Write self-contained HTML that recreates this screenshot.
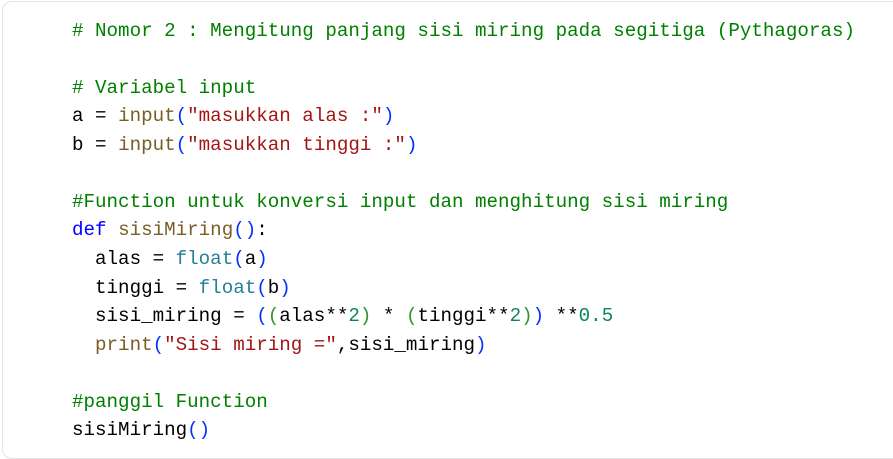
<!DOCTYPE html>
<html><head><meta charset="utf-8"><style>
html,body{margin:0;padding:0;background:#fff;width:893px;height:459px;overflow:hidden}
.box{position:absolute;left:2px;top:1px;width:900px;height:456px;border:1px solid #e3e3e3;border-radius:10px;background:#fff}
pre{position:absolute;left:72px;top:16.5px;margin:0;font-family:"Liberation Mono",monospace;font-size:19.2px;line-height:28.57px;color:#000}
.c{color:#008000}.k{color:#0000ff}.f{color:#795e26}.s{color:#a31515}.b{color:#267f99}.p{color:#0431fa}.q{color:#319331}.n{color:#098658}
</style></head><body><div class="box"></div>
<pre><span class="c"># Nomor 2 : Mengitung panjang sisi miring pada segitiga (Pythagoras)</span>

<span class="c"># Variabel input</span>
a = <span class="f">input</span><span class="p">(</span><span class="s">"masukkan alas :"</span><span class="p">)</span>
b = <span class="f">input</span><span class="p">(</span><span class="s">"masukkan tinggi :"</span><span class="p">)</span>

<span class="c">#Function untuk konversi input dan menghitung sisi miring</span>
<span class="k">def</span> <span class="f">sisiMiring</span><span class="p">()</span>:
  alas = <span class="b">float</span><span class="p">(</span>a<span class="p">)</span>
  tinggi = <span class="b">float</span><span class="p">(</span>b<span class="p">)</span>
  sisi_miring = <span class="p">(</span><span class="q">(</span>alas**<span class="n">2</span><span class="q">)</span> * <span class="q">(</span>tinggi**<span class="n">2</span><span class="q">)</span><span class="p">)</span> **<span class="n">0.5</span>
  <span class="f">print</span><span class="p">(</span><span class="s">"Sisi miring ="</span>,sisi_miring<span class="p">)</span>

<span class="c">#panggil Function</span>
sisiMiring<span class="p">()</span></pre>
</body></html>
